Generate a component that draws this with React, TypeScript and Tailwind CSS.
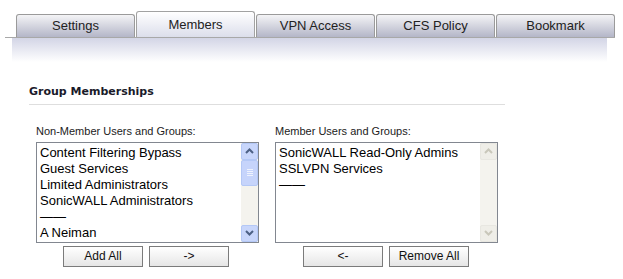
import React from 'react'

const tabs = ['Settings', 'Members', 'VPN Access', 'CFS Policy', 'Bookmark']

const nonMembers = [
  'Content Filtering Bypass',
  'Guest Services',
  'Limited Administrators',
  'SonicWALL Administrators',
  '——',
  'A Neiman',
]

const members = ['SonicWALL Read-Only Admins', 'SSLVPN Services', '——']

const Arrow: React.FC<{ up?: boolean; color: string }> = ({ up, color }) => (
  <svg width="9" height="6" viewBox="0 0 9 6">
    <path
      d={up ? 'M1 5 L4.5 1.5 L8 5' : 'M1 1 L4.5 4.5 L8 1'}
      fill="none"
      stroke={color}
      strokeWidth="2"
    />
  </svg>
)

const ListBox: React.FC<{ items: string[]; active?: boolean }> = ({ items, active }) => (
  <div className="flex h-[101px] w-[223px] border border-[#828790] bg-white">
    <div className="flex-1 overflow-hidden pl-[3px] pt-[2px] text-[13px] leading-[16px] text-black [font-family:'Liberation_Sans',Arial,sans-serif]">
      {items.map((it, i) => (
        <div key={i} className="whitespace-nowrap">
          {it}
        </div>
      ))}
    </div>
    {active ? (
      <div className="flex w-[17px] flex-col bg-[#f4f3ee]">
        <div className="flex h-[17px] items-center justify-center rounded-[2px] border border-[#b4c8f6] bg-[#c8d6fb]">
          <Arrow up color="#4d6185" />
        </div>
        <div className="flex h-[26px] flex-col items-center justify-center gap-[1px] rounded-[2px] border border-[#b4c8f6] bg-[#c6d4fb]">
          <div className="h-px w-[6px] bg-[#eef2fd]" />
          <div className="h-px w-[6px] bg-[#eef2fd]" />
          <div className="h-px w-[6px] bg-[#eef2fd]" />
          <div className="h-px w-[6px] bg-[#eef2fd]" />
        </div>
        <div className="flex-1" />
        <div className="flex h-[17px] items-center justify-center rounded-[2px] border border-[#b4c8f6] bg-[#c8d6fb]">
          <Arrow color="#4d6185" />
        </div>
      </div>
    ) : (
      <div className="flex w-[17px] flex-col bg-[#f4f3ee]">
        <div className="flex h-[17px] items-center justify-center rounded-[2px] border border-[#e8e7e1] bg-[#efeee8]">
          <Arrow up color="#c9c7ba" />
        </div>
        <div className="flex-1" />
        <div className="flex h-[17px] items-center justify-center rounded-[2px] border border-[#e8e7e1] bg-[#efeee8]">
          <Arrow color="#c9c7ba" />
        </div>
      </div>
    )}
  </div>
)

const Btn: React.FC<{ label: string }> = ({ label }) => (
  <button className="h-[21px] w-[80px] border border-[#7b7b7b] bg-gradient-to-b from-white to-[#e6e6e6] text-[12px] text-[#111] [font-family:'Liberation_Sans',Arial,sans-serif]">
    {label}
  </button>
)

const App: React.FC = () => {
  return (
    <div className="h-[279px] w-[623px] overflow-hidden bg-white">
      {/* tab strip */}
      <div className="flex items-end gap-[1px] pl-[16px] pt-[11px]">
        {tabs.map((t) => (
          <div
            key={t}
            className={
              t === 'Members'
                ? 'flex h-[26px] w-[119px] items-center justify-center rounded-t-[3px] border border-b-0 border-[#a2a2a2] bg-gradient-to-b from-white to-[#dcdeeb] text-[13px] text-[#222] [font-family:\'Liberation_Sans\',Arial,sans-serif]'
                : 'flex h-[23px] w-[119px] items-center justify-center rounded-t-[3px] border border-b-0 border-[#9a9a9a] bg-gradient-to-b from-[#f4f4f6] to-[#b4b6c8] text-[13px] text-[#222] [font-family:\'Liberation_Sans\',Arial,sans-serif]'
            }
          >
            {t}
          </div>
        ))}
      </div>
      <div className="ml-[5px] w-[610px] border-t border-[#a8a8a8]" />
      <div className="ml-[12px] h-[24px] w-[595px] bg-gradient-to-b from-[#d3d5e6] to-white" />

      {/* group memberships */}
      <div className="ml-[29px] mt-[22px] w-[476px] border-b border-[#dedede] pb-[3px] text-[11px] font-bold text-[#1a1a2a] [font-family:'DejaVu_Sans',Verdana,sans-serif]">
        Group Memberships
      </div>

      <div className="ml-[36px] mt-[20px] flex gap-[16px]">
        <div className="flex flex-col">
          <div className="mb-[4px] text-[11px] leading-[13px] text-[#222] [font-family:'Liberation_Sans',Tahoma,sans-serif]">
            Non-Member Users and Groups:
          </div>
          <ListBox items={nonMembers} active />
          <div className="mt-[3px] flex gap-[6px] pl-[27px]">
            <Btn label="Add All" />
            <Btn label="->" />
          </div>
        </div>
        <div className="flex flex-col">
          <div className="mb-[4px] text-[11px] leading-[13px] text-[#222] [font-family:'Liberation_Sans',Tahoma,sans-serif]">
            Member Users and Groups:
          </div>
          <ListBox items={members} />
          <div className="mt-[3px] flex gap-[6px] pl-[28px]">
            <Btn label="<-" />
            <Btn label="Remove All" />
          </div>
        </div>
      </div>
    </div>
  )
}

export default App
